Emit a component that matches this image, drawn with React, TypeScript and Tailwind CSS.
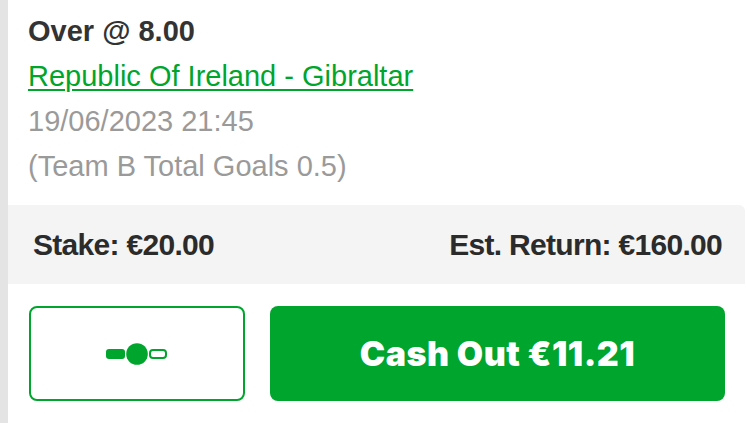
import React from "react";

export default function App() {
  return (
    <div className="flex w-[747px] h-[423px] bg-white overflow-hidden" style={{ fontFamily: "'Liberation Sans', Arial, sans-serif" }}>
      <div className="w-[8px] shrink-0 bg-[#e4e4e4]" />
      <div className="flex flex-col w-[737px]">
        <div className="pl-[20px] pt-[9px] flex flex-col">
          <div className="text-[29px] leading-[45px] font-bold text-[#333333]">Over @ 8.00</div>
          <div className="text-[29px] leading-[45px]">
            <a className="text-[#00a52d] underline decoration-[2px] underline-offset-[3px]">Republic Of Ireland - Gibraltar</a>
          </div>
          <div className="text-[29px] leading-[45px] text-[#9a9a9a]">19/06/2023 21:45</div>
          <div className="text-[29px] leading-[45px] text-[#9a9a9a]">(Team B Total Goals 0.5)</div>
        </div>
        <div className="mt-[16px] h-[79px] bg-[#f4f4f4] rounded-tr-[6px] flex items-center justify-between pl-[25px] pr-[23px]">
          <span className="text-[30px] font-bold text-[#2b2b2b] tracking-[-0.7px]">Stake: €20.00</span>
          <span className="text-[30px] font-bold text-[#2b2b2b] tracking-[-0.7px]">Est. Return: €160.00</span>
        </div>
        <div className="flex gap-[25px] pl-[21px] pr-[20px] mt-[22px]">
          <button className="w-[216px] h-[95px] border-2 border-[#00a52d] rounded-[8px] flex items-center justify-center bg-white">
            <svg width="62" height="22" viewBox="0 0 62 22">
              <rect x="0" y="6" width="19" height="10" rx="3" fill="#00a52d" />
              <circle cx="31" cy="11" r="10.8" fill="#00a52d" />
              <rect x="44" y="7" width="16" height="8" rx="3" fill="none" stroke="#00a52d" strokeWidth="2" />
            </svg>
          </button>
          <button className="flex-1 h-[95px] rounded-[8px] bg-[#00a52d] flex items-center justify-center">
            <span className="text-white text-[34px] font-black tracking-[0.5px]" style={{ fontFamily: "Inter, 'Open Sans', sans-serif" }}>Cash Out €11.21</span>
          </button>
        </div>
      </div>
    </div>
  );
}
